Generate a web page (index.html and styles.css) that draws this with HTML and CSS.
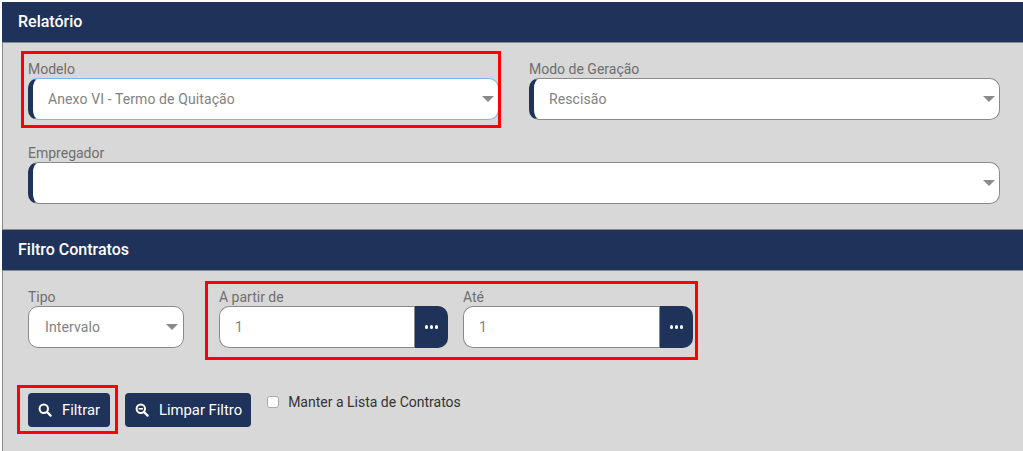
FILE: index.html
```html
<!DOCTYPE html>
<html lang="pt-BR">
<head>
    <meta charset="UTF-8">
    <title>Relatório</title>
    <link rel="stylesheet" href="styles.css">
</head>
<body>

<div class="panel">
    <h2 class="panel-title">Relatório</h2>
    <div class="form-rows">
        <div class="form-row">
            <div class="form-group grow">
                <label>Modelo</label>
                <div class="select marked focused">
                    <span>Anexo VI - Termo de Quitação</span>
                    <i class="caret"></i>
                </div>
            </div>
            <div class="form-group grow">
                <label>Modo de Geração</label>
                <div class="select marked">
                    <span>Rescisão</span>
                    <i class="caret"></i>
                </div>
            </div>
        </div>
        <div class="form-row">
            <div class="form-group grow">
                <label>Empregador</label>
                <div class="select marked">
                    <span></span>
                    <i class="caret"></i>
                </div>
            </div>
        </div>
    </div>

    <h2 class="panel-title second">Filtro Contratos</h2>
    <div class="filter-row">
        <div class="form-group tipo">
            <label>Tipo</label>
            <div class="select small">
                <span>Intervalo</span>
                <i class="caret"></i>
            </div>
        </div>
        <div class="form-group range first">
            <label>A partir de</label>
            <div class="input-group">
                <div class="input">1</div>
                <button class="dots" type="button"><i></i><i></i><i></i></button>
            </div>
        </div>
        <div class="form-group range">
            <label>Até</label>
            <div class="input-group">
                <div class="input">1</div>
                <button class="dots" type="button"><i></i><i></i><i></i></button>
            </div>
        </div>
    </div>

    <div class="buttons">
        <button class="btn" type="button">
            <svg viewBox="0 0 14 14" width="14" height="14"><circle cx="5.8" cy="5.8" r="4.2" fill="none" stroke="#fff" stroke-width="2"/><path d="M9 9l3.6 3.6" stroke="#fff" stroke-width="2.2" stroke-linecap="round"/></svg>
            Filtrar
        </button>
        <button class="btn" type="button">
            <svg viewBox="0 0 14 14" width="14" height="14"><circle cx="5.8" cy="5.8" r="4.2" fill="none" stroke="#fff" stroke-width="2"/><path d="M9 9l3.6 3.6" stroke="#fff" stroke-width="2.2" stroke-linecap="round"/><path d="M3.6 5.8h4.4" stroke="#fff" stroke-width="1.6"/></svg>
            Limpar Filtro
        </button>
        <label class="check"><input type="checkbox"> Manter a Lista de Contratos</label>
    </div>

    <!-- marcacoes vermelhas -->
    <div class="mark mark-modelo"></div>
    <div class="mark mark-range"></div>
    <div class="mark mark-filtrar"></div>
</div>

</body>
</html>
```

FILE: styles.css
```css
html, body {
    margin: 0;
    height: 100%;
    background: #fff;
    overflow: hidden;
}
body {
    padding: 2px 0 0 2px;
    box-sizing: border-box;
    font-family: Roboto, Arial, sans-serif;
}
.panel {
    height: 100%;
    background: #d8d8d8;
    border-left: 1px solid #8a8a8a;
    box-sizing: border-box;
}
.panel-title {
    height: 40px;
    line-height: 39px;
    margin: 0 0 0 -1px;
    padding-left: 16px;
    background: #1f3259;
    border-bottom: 1px solid #8a8a8a;
    color: #fff;
    font-size: 16px;
    font-weight: 500;
}
.panel-title.second {
    border-top: 1px solid #8a8a8a;
}
.form-rows {
    padding: 17px 23px 25px 25px;
}
.form-row {
    display: flex;
    gap: 30px;
    margin-bottom: 24px;
}
.form-row:last-child {
    margin-bottom: 0;
}
.form-group label {
    display: block;
    height: 18px;
    line-height: 18px;
    font-size: 14px;
    color: #6e6e6e;
}
.form-group.grow {
    flex: 1;
}
.select, .input {
    display: flex;
    align-items: center;
    justify-content: space-between;
    height: 42px;
    box-sizing: border-box;
    background: #fff;
    border: 1px solid #8a8a8a;
    border-radius: 10px;
    padding: 0 4px 0 15px;
    font-size: 14px;
    letter-spacing: 0.1px;
    color: #828282;
}
.select.marked {
    border-left: 5px solid #1f3259;
}
.select.focused {
    border-color: #7fb2ee;
    border-left-color: #1f3259;
}
.select.small {
    padding-left: 16px;
    padding-right: 5px;
}
.caret {
    border-left: 6px solid transparent;
    border-right: 6px solid transparent;
    border-top: 6px solid #8a8a8a;
}
.filter-row {
    display: flex;
    padding: 17px 0 0 25px;
}
.tipo {
    width: 156px;
}
.range {
    margin-left: 15px;
    width: 230px;
}
.range.first {
    margin-left: 35px;
    width: 229px;
}
.input-group {
    display: flex;
}
.input {
    flex: 1;
    border-radius: 10px 0 0 10px;
    border-right: 0;
}
.dots {
    display: flex;
    align-items: center;
    justify-content: center;
    gap: 1.5px;
    width: 34px;
    height: 42px;
    padding: 0;
    background: #1f3259;
    border: 0;
    border-left: 1px solid #8a8a8a;
    border-radius: 0 10px 10px 0;
}
.dots i {
    width: 3.5px;
    height: 3.5px;
    background: #fff;
    border-radius: 50%;
}
.buttons {
    display: flex;
    align-items: flex-start;
    gap: 15px;
    padding: 45px 0 0 25px;
}
.btn {
    display: flex;
    align-items: center;
    gap: 10px;
    min-width: 82px;
    height: 34px;
    padding: 0 9px 0 10px;
    background: #1f3259;
    border: 0;
    border-radius: 4px;
    color: #fff;
    font-family: Roboto, Arial, sans-serif;
    font-size: 14.8px;
}
.check {
    display: flex;
    align-items: center;
    gap: 9px;
    height: 18px;
    margin-left: 1px;
    font-size: 14px;
    color: #333;
}
.check input {
    appearance: none;
    width: 12px;
    height: 12px;
    margin: 0;
    background: #fff;
    border: 1px solid #aaa;
    border-radius: 3px;
    box-sizing: border-box;
}
.mark {
    position: absolute;
    border: 3px solid #f00;
    box-sizing: border-box;
}
.mark-modelo {
    left: 21px;
    top: 51px;
    width: 480px;
    height: 77px;
}
.mark-range {
    left: 205px;
    top: 281px;
    width: 493px;
    height: 79px;
}
.mark-filtrar {
    left: 17px;
    top: 385px;
    width: 101px;
    height: 49px;
}
```
